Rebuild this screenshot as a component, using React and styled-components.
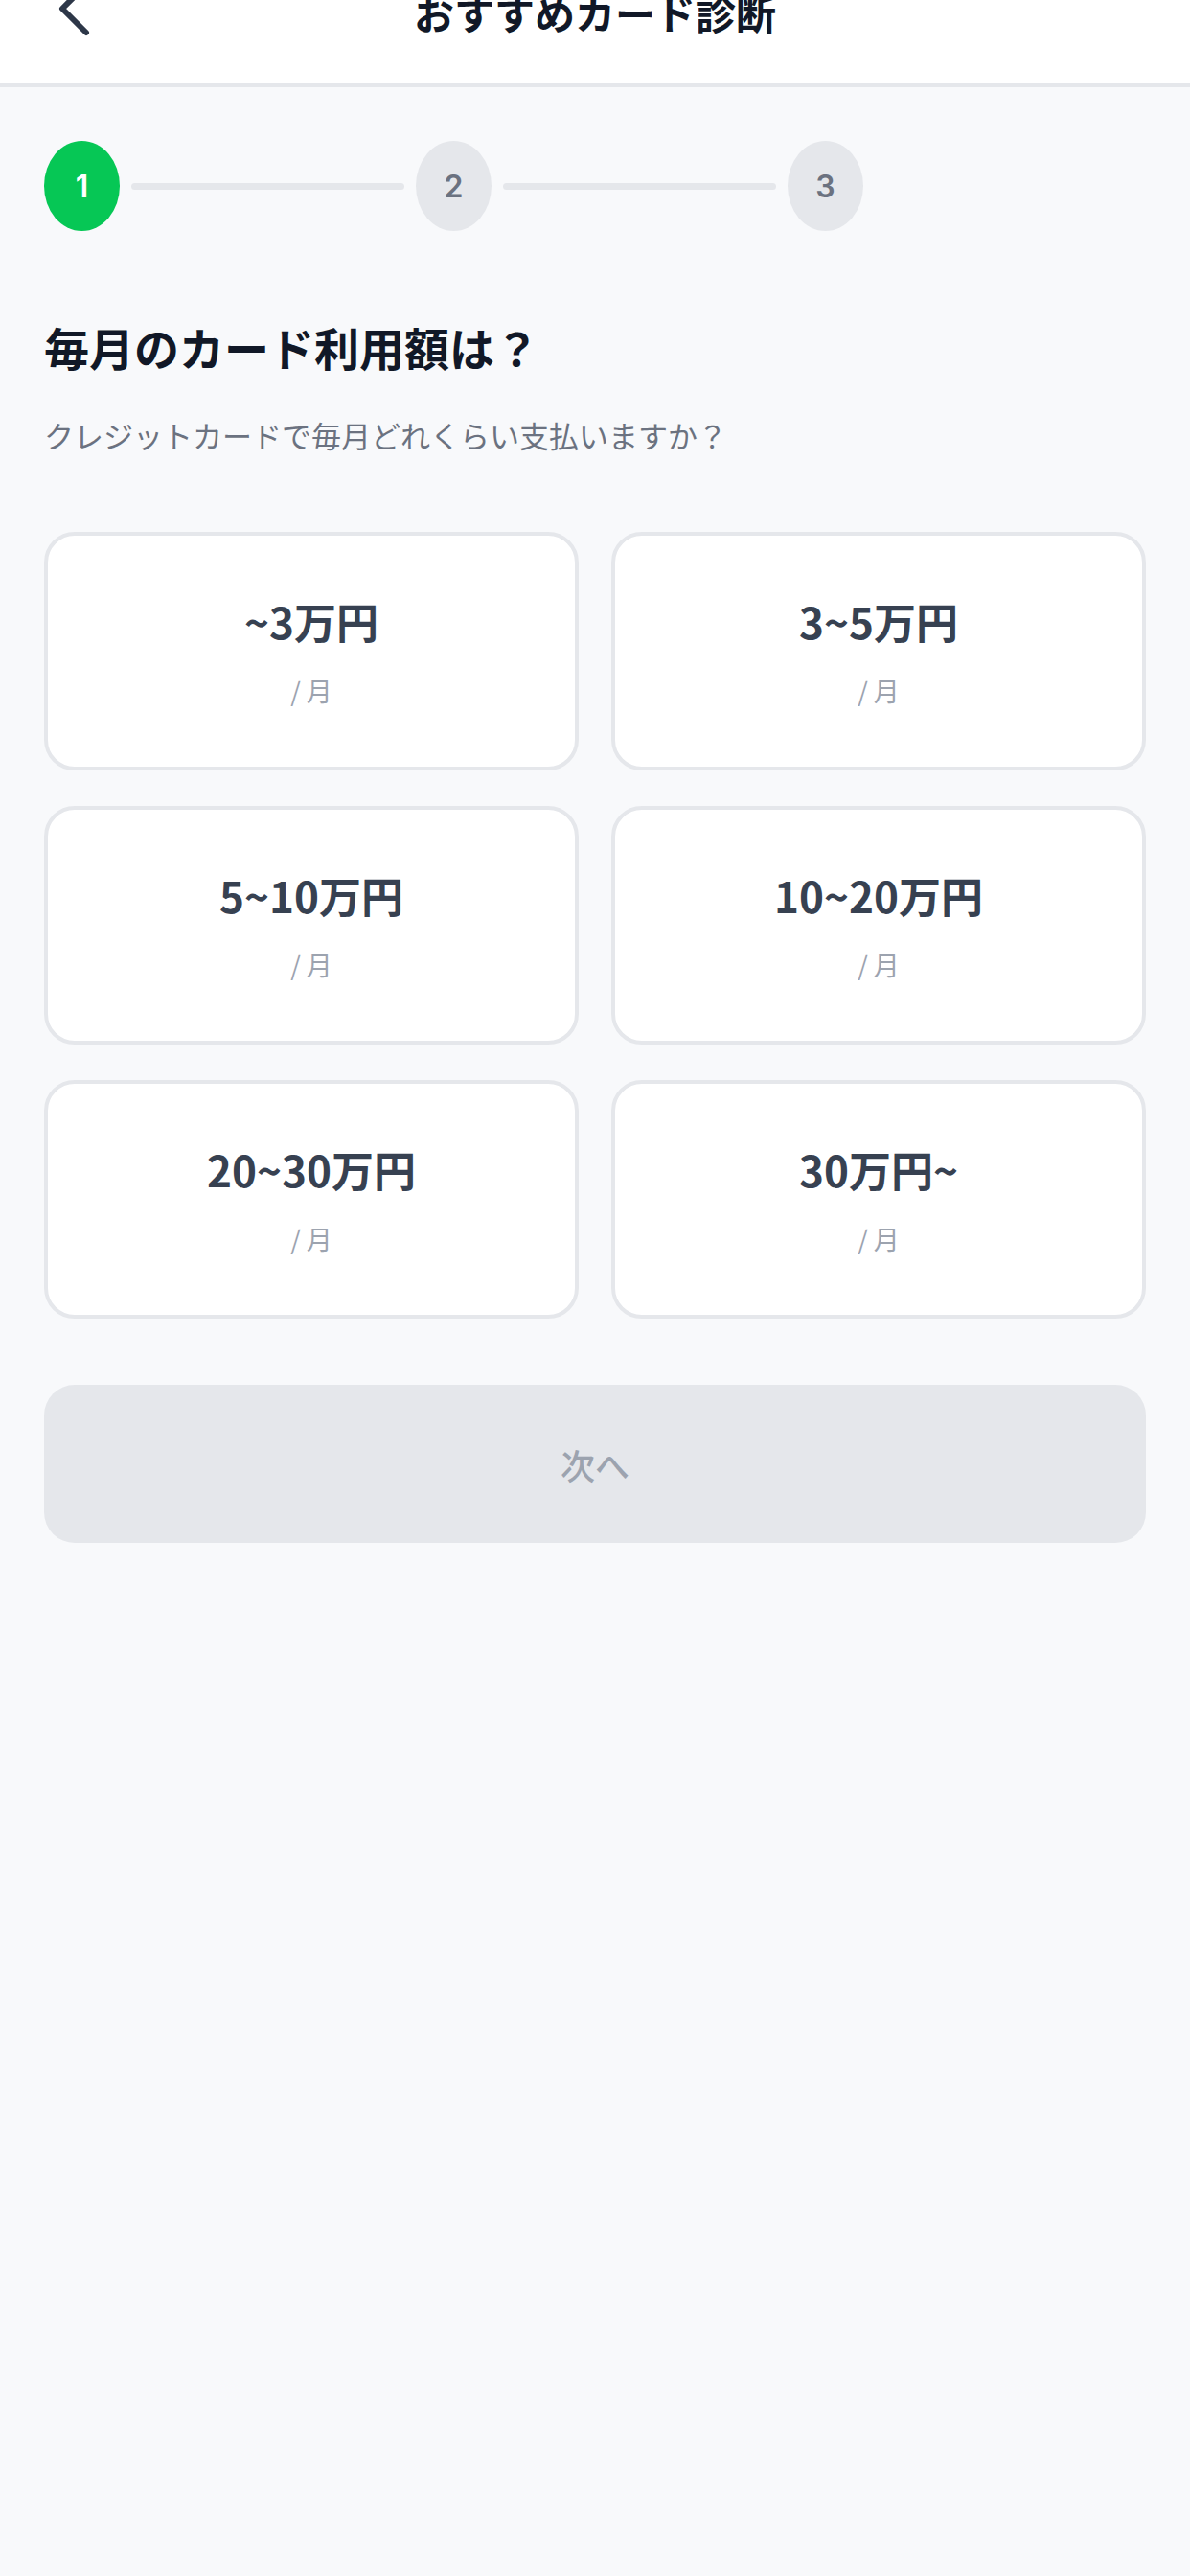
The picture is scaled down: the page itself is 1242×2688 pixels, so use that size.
import React from "react";
import styled, { createGlobalStyle } from "styled-components";

const GlobalStyle = createGlobalStyle`
  html, body {
    margin: 0;
    padding: 0;
    background: #f8f9fb;
  }
  body {
    font-family: "Noto Sans CJK JP", "Noto Sans", sans-serif;
    -webkit-font-smoothing: antialiased;
  }
`;

const amounts = [
  { id: "a1", label: "~3万円" },
  { id: "a2", label: "3~5万円" },
  { id: "a3", label: "5~10万円" },
  { id: "a4", label: "10~20万円" },
  { id: "a5", label: "20~30万円" },
  { id: "a6", label: "30万円~" },
];

const App = () => {
  return (
    <Page>
      <GlobalStyle />
      <Header>
        <BackButton aria-label="戻る">
          <svg width="40" height="62" viewBox="0 0 40 62" fill="none">
            <path d="M34 8 L9 33 L34 58" stroke="#2d3748" strokeWidth="6" strokeLinecap="round" strokeLinejoin="round" />
          </svg>
        </BackButton>
        <HeaderTitle>おすすめカード診断</HeaderTitle>
      </Header>
      <Content>
        <Stepper>
          <StepDot active>1</StepDot>
          <StepLine />
          <StepDot>2</StepDot>
          <StepLine />
          <StepDot>3</StepDot>
        </Stepper>
        <Title>毎月のカード利用額は？</Title>
        <Description>クレジットカードで毎月どれくらい支払いますか？</Description>
        <OptionGrid>
          {amounts.map((item) => (
            <OptionCard key={item.id}>
              <OptionLabel>{item.label}</OptionLabel>
              <OptionUnit>/ 月</OptionUnit>
            </OptionCard>
          ))}
        </OptionGrid>
        <NextButton disabled>次へ</NextButton>
      </Content>
    </Page>
  );
};
export default App;

const Page = styled.div`
  min-height: 2688px;
  background: #f8f9fb;
`;

const Header = styled.header`
  position: relative;
  height: 87px;
  background: #ffffff;
  border-bottom: 4px solid #e5e7eb;
  display: flex;
  justify-content: center;
  align-items: flex-start;
  overflow: hidden;
`;

const BackButton = styled.button`
  position: absolute;
  left: 56px;
  top: -24px;
  padding: 0;
  border: none;
  background: none;
  display: flex;
`;

const HeaderTitle = styled.h1`
  margin: -12px 0 0;
  font-size: 42px;
  line-height: 1.2;
  font-weight: 700;
  color: #111827;
`;

const Content = styled.main`
  padding: 56px 46px 0;
`;

const Stepper = styled.div`
  display: flex;
  align-items: center;
`;

const StepDot = styled.div`
  width: 79px;
  height: 94px;
  border-radius: 50%;
  display: flex;
  align-items: center;
  justify-content: center;
  flex-shrink: 0;
  background: ${(props) => (props.active ? "#06c755" : "#e5e7eb")};
  color: ${(props) => (props.active ? "#ffffff" : "#6b7280")};
  font-family: "Inter", "Noto Sans", sans-serif;
  font-size: 32px;
  font-weight: 600;
`;

const StepLine = styled.div`
  width: 285px;
  height: 7px;
  margin: 0 12px;
  border-radius: 4px;
  background: #e5e7eb;
`;

const Title = styled.h2`
  margin: 90px 0 0;
  font-size: 47px;
  line-height: 1.3;
  font-weight: 700;
  color: #111827;
`;

const Description = styled.p`
  margin: 40px 0 0;
  font-size: 31px;
  line-height: 1.4;
  color: #6b7280;
`;

const OptionGrid = styled.div`
  display: grid;
  grid-template-columns: 1fr 1fr;
  column-gap: 34px;
  row-gap: 37px;
  margin-top: 80px;
`;

const OptionCard = styled.button`
  height: 249px;
  box-sizing: border-box;
  background: #ffffff;
  border: 4px solid #e5e7eb;
  border-radius: 32px;
  display: flex;
  flex-direction: column;
  align-items: center;
  justify-content: center;
  gap: 30px;
  padding: 0;
  font-family: inherit;
`;

const OptionLabel = styled.span`
  font-size: 44px;
  line-height: 1.2;
  font-weight: 700;
  color: #374151;
`;

const OptionUnit = styled.span`
  font-size: 27px;
  line-height: 1.2;
  color: #9ca3af;
`;

const NextButton = styled.button`
  display: flex;
  align-items: center;
  justify-content: center;
  width: 100%;
  height: 165px;
  margin-top: 69px;
  border: none;
  border-radius: 32px;
  background: #e5e7eb;
  color: #9ca3af;
  font-family: inherit;
  font-size: 36px;
  font-weight: 500;
`;
